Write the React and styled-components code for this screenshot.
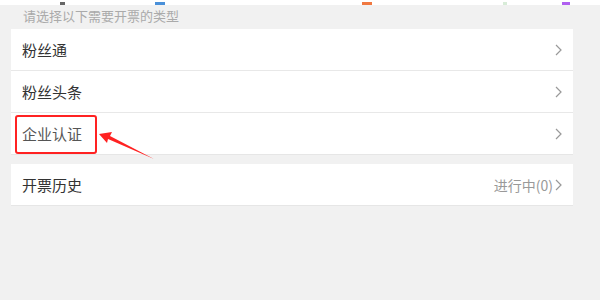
import React from "react";
import styled, { createGlobalStyle } from "styled-components";

const GlobalStyle = createGlobalStyle`
  html, body {
    margin: 0;
    padding: 0;
    background: #f1f1f1;
    font-family: "Noto Sans CJK SC", "Noto Sans", sans-serif;
  }
`;

const Page = styled.div`
  width: 600px;
  height: 300px;
  background: #f1f1f1;
  overflow: hidden;
`;

const TopBar = styled.div`
  height: 5px;
  background: #fff;
  display: flex;
  align-items: flex-end;
`;

const Mark = styled.span`
  margin-left: ${(p) => p.$gap}px;
  width: ${(p) => p.$w}px;
  height: 3px;
  background: ${(p) => p.$color};
`;

const Hint = styled.div`
  height: 24px;
  padding-left: 23px;
  font-size: 13px;
  line-height: 22px;
  color: #aaa;
`;

const Card = styled.div`
  margin: 0 27px 0 11px;
  background: #fff;
  border-bottom: 1px solid #e6e6e6;
  & + & {
    margin-top: 9px;
  }
`;

const Row = styled.div`
  position: relative;
  box-sizing: border-box;
  height: ${(p) => (p.$first ? 41 : 42)}px;
  display: flex;
  align-items: center;
  padding: 0 11px;
  border-top: ${(p) => (p.$first ? "none" : "1px solid #e8e8e8")};
`;

const Label = styled.span`
  flex: 1;
  font-size: 15px;
  color: ${(p) => (p.$muted ? "#555" : "#333")};
`;

const Status = styled.span`
  font-size: 14px;
  color: #999;
  margin-right: 2px;
`;

const Chevron = styled.svg`
  width: 7px;
  height: 12px;
  flex: none;
`;

const Highlight = styled.div`
  position: absolute;
  left: 4px;
  top: 2px;
  width: 78px;
  height: 35px;
  border: 2px solid #f22;
  border-radius: 3px;
`;

const Pointer = styled.svg`
  position: absolute;
  left: 88px;
  top: 12px;
  width: 60px;
  height: 40px;
  overflow: visible;
`;

const Arrow = () => (
  <Chevron viewBox="0 0 7 12">
    <path d="M1 1 L6 6 L1 11" fill="none" stroke="#999" strokeWidth="1.2" />
  </Chevron>
);

const items = ["粉丝通", "粉丝头条", "企业认证"];

const App = () => {
  return (
    <Page>
      <GlobalStyle />
      <TopBar>
        <Mark $gap={60} $w={5} $color="#666" />
        <Mark $gap={90} $w={10} $color="#4a90d9" />
        <Mark $gap={197} $w={10} $color="#f07840" />
        <Mark $gap={131} $w={4} $color="#d8ecd8" />
        <Mark $gap={55} $w={8} $color="#b060f0" />
      </TopBar>
      <Hint>请选择以下需要开票的类型</Hint>
      <Card>
        {items.map((t, i) => (
          <Row key={t} $first={i === 0}>
            <Label $muted={i === 2}>{t}</Label>
            <Arrow />
            {i === 2 && (
              <>
                <Highlight />
                <Pointer viewBox="0 0 60 40">
                  <polygon
                    points="0,9 13,7 11,11 55,34 9,14 8,18"
                    fill="#f22"
                  />
                </Pointer>
              </>
            )}
          </Row>
        ))}
      </Card>
      <Card>
        <Row $first>
          <Label>开票历史</Label>
          <Status>进行中(0)</Status>
          <Arrow />
        </Row>
      </Card>
    </Page>
  );
};

export default App;
